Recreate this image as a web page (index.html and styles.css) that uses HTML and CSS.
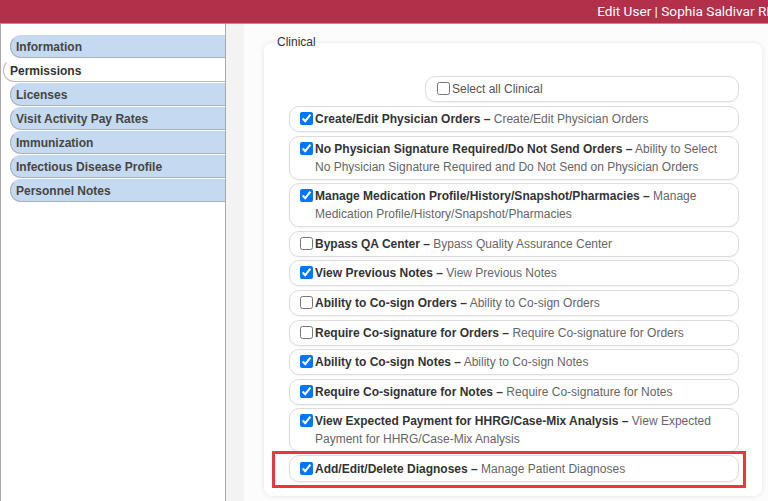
FILE: index.html
```html
<!DOCTYPE html>
<html>
<head>
<meta charset="utf-8">
<link rel="stylesheet" href="styles.css">
</head>
<body>
<div class="header"><span class="title">Edit User | Sophia Saldivar RN</span></div>
<div class="layout">
  <div class="sidebar">
    <div class="tab">Information</div>
    <div class="tab active">Permissions</div>
    <div class="tab">Licenses</div>
    <div class="tab">Visit Activity Pay Rates</div>
    <div class="tab">Immunization</div>
    <div class="tab">Infectious Disease Profile</div>
    <div class="tab">Personnel Notes</div>
  </div>
  <div class="strip"></div>
  <div class="main">
    <fieldset class="card">
      <legend>Clinical</legend>
      <div class="select-all-wrap">
        <label class="row select-all"><input type="checkbox"><span>Select all Clinical</span></label>
      </div>
      <label class="row"><input type="checkbox" checked><span class="txt"><b>Create/Edit Physician Orders –</b> Create/Edit Physician Orders</span></label>
      <label class="row"><input type="checkbox" checked><span class="txt"><b>No Physician Signature Required/Do Not Send Orders –</b> Ability to Select No Physician Signature Required and Do Not Send on Physician Orders</span></label>
      <label class="row"><input type="checkbox" checked><span class="txt"><b>Manage Medication Profile/History/Snapshot/Pharmacies –</b> Manage Medication Profile/History/Snapshot/Pharmacies</span></label>
      <label class="row"><input type="checkbox"><span class="txt"><b>Bypass QA Center –</b> Bypass Quality Assurance Center</span></label>
      <label class="row"><input type="checkbox" checked><span class="txt"><b>View Previous Notes –</b> View Previous Notes</span></label>
      <label class="row"><input type="checkbox"><span class="txt"><b>Ability to Co-sign Orders –</b> Ability to Co-sign Orders</span></label>
      <label class="row"><input type="checkbox"><span class="txt"><b>Require Co-signature for Orders –</b> Require Co-signature for Orders</span></label>
      <label class="row"><input type="checkbox" checked><span class="txt"><b>Ability to Co-sign Notes –</b> Ability to Co-sign Notes</span></label>
      <label class="row"><input type="checkbox" checked><span class="txt"><b>Require Co-signature for Notes –</b> Require Co-signature for Notes</span></label>
      <label class="row"><input type="checkbox" checked><span class="txt"><b>View Expected Payment for HHRG/Case-Mix Analysis –</b> View Expected Payment for HHRG/Case-Mix Analysis</span></label>
      <div class="highlight">
        <label class="row last"><input type="checkbox" checked><span class="txt"><b>Add/Edit/Delete Diagnoses –</b> Manage Patient Diagnoses</span></label>
      </div>
    </fieldset>
  </div>
</div>
</body>
</html>
```

FILE: styles.css
```css
* { box-sizing: border-box; }
html, body { margin: 0; padding: 0; }
body {
  width: 768px;
  height: 501px;
  overflow: hidden;
  font-family: "Liberation Sans", Arial, sans-serif;
  font-size: 12px;
  color: #333;
  background: #fff;
}
.header {
  height: 24px;
  background: #b3304b;
  border-bottom: 1px solid #9a9a9a;
  text-align: right;
  overflow: hidden;
  white-space: nowrap;
}
.title {
  display: inline-block;
  color: #fff;
  font-family: Roboto, "Liberation Sans", Arial, sans-serif;
  font-size: 13.6px;
  line-height: 23px;
  margin-right: -8px;
}
.layout {
  display: flex;
  height: 477px;
}
.sidebar {
  width: 226px;
  flex: none;
  border-left: 1px solid #aaa;
  border-right: 1px solid #aaa;
  padding-top: 11px;
  background: #fff;
}
.tab {
  margin-left: 9px;
  height: 23px;
  margin-bottom: 1px;
  background: #c5d9f0;
  border: 1px solid #a9b1bb;
  border-right: none;
  border-top-color: #c5d9f0;
  border-radius: 11px 0 0 11px;
  padding-left: 5px;
  font-weight: bold;
  color: #454545;
  line-height: 22px;
}
.tab.active {
  margin-left: 2px;
  background: #fff;
  border-color: #bbb;
  border-top-color: #fff;
  padding-left: 6px;
  color: #333;
}
.strip {
  width: 18px;
  flex: none;
  background: #f3f3f3;
}
.main {
  flex: 1;
  background: #fcfcfc;
  padding: 11px 5px 0 19px;
}
.card {
  margin: 0;
  height: 462px;
  border: 1px solid #f1f1f1;
  border-radius: 9px;
  background: #fff;
  box-shadow: 0 0 4px rgba(0,0,0,0.07);
  padding: 27px 23px 0 25px;
}
.card legend {
  margin-left: -13px;
  padding: 0 1px;
  font-size: 12px;
  color: #333;
  line-height: 14px;
}
.select-all-wrap {
  display: flex;
  justify-content: flex-end;
}
.row {
  display: flex;
  align-items: flex-start;
  border: 1px solid #dcdcdc;
  border-radius: 10px;
  padding: 3px 10px;
  line-height: 18px;
  min-height: 26px;
  margin-bottom: 3.6px;
  box-shadow: 0 1px 2px rgba(0,0,0,0.05);
  background: #fff;
  color: #666;
}
.row.select-all {
  width: 314px;
  margin-bottom: 4px;
  padding-left: 11px;
  color: #555;
}
.row input {
  width: 13px;
  height: 13px;
  margin: 2px 2px 0 0;
  flex: none;
}
.row b {
  color: #333;
}
.txt { flex: 1; }
.highlight {
  margin: -4.6px -7px 0 -17px;
  padding: 1px 4px 3px 14px;
  border: 3px solid #e8373d;
}
.row.last {
  margin-bottom: 0;
  min-height: 27px;
  padding-top: 4px;
}
```
